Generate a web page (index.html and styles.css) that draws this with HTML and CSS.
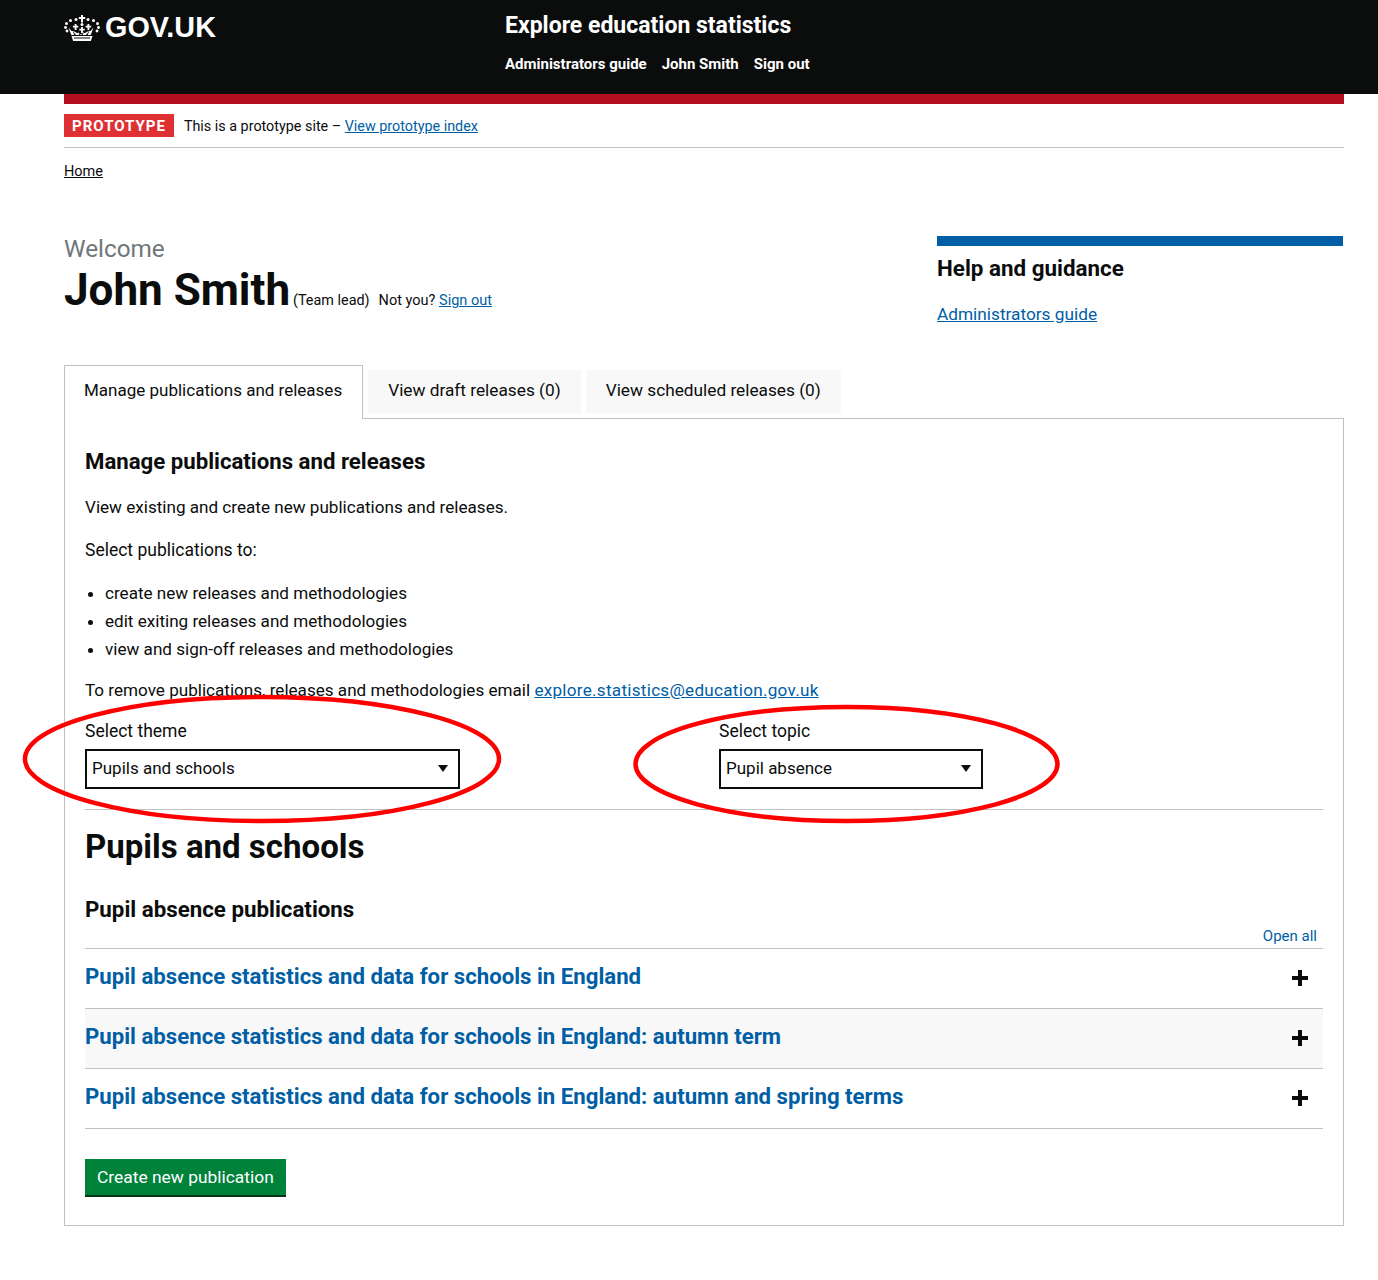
FILE: index.html
```html
<!DOCTYPE html>
<html lang="en">
<head>
<meta charset="utf-8">
<title>Explore education statistics</title>
<link rel="stylesheet" href="styles.css">
</head>
<body>
<header class="site-header">
  <div class="header-inner">
    <a class="logo" href="#">
      <svg class="crown" viewBox="0 0 36 26" width="36" height="26" aria-hidden="true">
        <g fill="#fff">
          <path d="M17 0h2v2h2.200v2H19v3.500h-2V4h-2.200V2H17z"/>
          <circle cx="18" cy="9.500" r="1.500"/>
          <circle cx="12" cy="4.500" r="1.500"/><circle cx="24" cy="4.500" r="1.500"/>
          <circle cx="6.500" cy="5.500" r="1.500"/><circle cx="29.500" cy="5.500" r="1.500"/>
          <circle cx="2.500" cy="8.500" r="1.500"/><circle cx="33.500" cy="8.500" r="1.500"/>
          <circle cx="1.500" cy="12.500" r="1.400"/><circle cx="34.500" cy="12.500" r="1.400"/>
          <circle cx="3" cy="16" r="1.400"/><circle cx="33" cy="16" r="1.400"/>
          <path d="M10.700 9h1.800v1.800h1.800v1.700h-1.800v2.500h-1.800v-2.500H8.900v-1.700h1.800zM23.500 9h1.800v1.800h1.800v1.700h-1.800v2.500h-1.800v-2.500h-1.800v-1.700h1.800z"/>
          <path d="M17.100 12h1.800v1.800h1.800v1.700h-1.800v2.500h-1.800v-2.500h-1.800v-1.700h1.800z"/>
          <path d="M4.500 12.500l2.800 7.500h3l-1.800-4.500 3.500 4.500h3.300l-1.200-3.500 2.400 3.500h1l2.400-3.500-1.200 3.500h3.300l3.500-4.500-1.800 4.500h3l2.800-7.500-3 3.500-2.500.2-3 1.800-2.500.5-1.500 1-1.500-1-2.500-.5-3-1.800-2.500-.2z"/>
          <path d="M7.500 21h21l-1.600 5H9.100zM9.600 22.400l.5 1.200h15.800l.5-1.200z" fill-rule="evenodd"/>
        </g>
      </svg>
      <span class="logo-text">GOV.UK</span>
    </a>
    <div class="service">
      <a class="service-name" href="#">Explore education statistics</a>
      <nav class="service-nav">
        <a href="#">Administrators guide</a>
        <a href="#">John Smith</a>
        <a href="#">Sign out</a>
      </nav>
    </div>
  </div>
</header>

<div class="container">
  <div class="red-bar"></div>
  <div class="phase">
    <strong class="phase-tag">PROTOTYPE</strong>
    <span>This is a prototype site – <a class="link" href="#">View prototype index</a></span>
  </div>
  <div class="breadcrumb"><a href="#">Home</a></div>

  <div class="intro">
    <div class="welcome">
      <div class="caption">Welcome</div>
      <div class="name-row">
        <h1 class="name">John Smith</h1>
        <span class="role">(Team lead)</span>
        <span class="notyou">Not you? <a class="link" href="#">Sign out</a></span>
      </div>
    </div>
    <aside class="help">
      <h2>Help and guidance</h2>
      <a class="link" href="#">Administrators guide</a>
    </aside>
  </div>

  <ul class="tabs">
    <li class="tab selected">Manage publications and releases</li>
    <li class="tab">View draft releases (0)</li>
    <li class="tab">View scheduled releases (0)</li>
  </ul>

  <section class="panel">
    <h2 class="panel-title">Manage publications and releases</h2>
    <p class="p1">View existing and create new publications and releases.</p>
    <p class="p2">Select publications to:</p>
    <ul class="bullets">
      <li>create new releases and methodologies</li>
      <li>edit exiting releases and methodologies</li>
      <li>view and sign-off releases and methodologies</li>
    </ul>
    <p class="p3">To remove publications, releases and methodologies email <a class="link email" href="#">explore.statistics@education.gov.uk</a></p>

    <div class="selects">
      <div class="field field-theme">
        <label>Select theme</label>
        <div class="select select-theme">Pupils and schools<span class="arrow"></span></div>
      </div>
      <div class="field field-topic">
        <label>Select topic</label>
        <div class="select select-topic">Pupil absence<span class="arrow"></span></div>
      </div>
    </div>

    <h2 class="theme-title">Pupils and schools</h2>
    <h3 class="topic-title">Pupil absence publications</h3>
    <div class="open-all"><a href="#">Open all</a></div>
    <div class="accordion">
      <div class="acc-row"><a href="#">Pupil absence statistics and data for schools in England</a><span class="plus"></span></div>
      <div class="acc-row shaded"><a href="#">Pupil absence statistics and data for schools in England: autumn term</a><span class="plus"></span></div>
      <div class="acc-row"><a href="#">Pupil absence statistics and data for schools in England: autumn and spring terms</a><span class="plus"></span></div>
    </div>
    <a class="button" href="#">Create new publication</a>
  </section>
</div>

<svg class="annotations" width="1378" height="1280" viewBox="0 0 1378 1280" aria-hidden="true">
  <ellipse cx="262" cy="759" rx="237" ry="62" />
  <ellipse cx="846.500" cy="764" rx="211" ry="57" />
</svg>
</body>
</html>
```
FILE: styles.css
```css
* { box-sizing: border-box; }
html, body { margin: 0; padding: 0; }
body {
  position: relative;
  height: 1280px;
  background: #fff;
  color: #0b0c0c;
  font-family: Roboto, "Liberation Sans", sans-serif;
  font-size: 16px;
  overflow: hidden;
}
a { color: inherit; }
.link { color: #005ea5; }

.site-header { background: #0b0c0c; height: 94px; }
.header-inner { display: flex; width: 1280px; margin-left: 64px; }
.logo {
  display: flex; align-items: flex-start; width: 441px; padding-top: 15px;
  color: #fff; text-decoration: none;
}
.crown { margin-right: 5px; }
.logo-text {
  font: bold 28.800px/26px "Liberation Sans", Arial, sans-serif; margin-top: -1px;
}
.service { padding-top: 12px; color: #fff; }
.service-name {
  display: block; font-size: 23px; line-height: 28px; font-weight: 700;
  color: #fff; text-decoration: none;
}
.service-nav { display: flex; gap: 15px; margin-top: 14px; }
.service-nav a {
  color: #fff; text-decoration: none; font-size: 15px; line-height: 20px; font-weight: 700;
}

.container { width: 1280px; margin-left: 64px; }
.red-bar { height: 10px; background: #b10e1e; }
.phase {
  display: flex; align-items: flex-start; gap: 10px;
  margin-top: 10px; height: 34px;
  border-bottom: 1px solid #bfc1c3;
  font-size: 14.350px; line-height: 25px;
}
.phase-tag {
  background: #df3034; color: #fff; padding: 0 8px;
  font-size: 15px; letter-spacing: 1px; font-weight: 700; height: 23px; line-height: 24px;
}
.breadcrumb { margin-top: 14px; font-size: 14.500px; line-height: 20px; }

.intro { display: flex; justify-content: space-between; margin-top: 54px; height: 129px; }
.caption { color: #6f777b; font-size: 24.300px; line-height: 30px; margin: -2px 0 1px; }
.name-row { display: flex; align-items: baseline; }
.name { margin: 0; font-size: 44px; line-height: 50px; font-weight: 700; }
.role { font-size: 14.400px; margin-left: 3px; }
.notyou { font-size: 14.500px; margin-left: 9px; }
.help { width: 406px; margin-right: 1px; border-top: 10px solid #005ea5; }
.help h2 { margin: 9px 0 21px; font-size: 22.400px; line-height: 26px; font-weight: 700; }
.help .link { font-size: 17.250px; line-height: 24px; }

.tabs {
  display: flex; align-items: flex-end; gap: 5px;
  list-style: none; margin: 0; padding: 0;
  position: relative; z-index: 1;
}
.tab {
  background: #f8f8f8; height: 43px; margin-bottom: 5px; padding: 0 20px;
  font-size: 17.250px; line-height: 40px;
}
.tab.selected {
  background: #fff; height: 54px; border: 1px solid #bfc1c3; border-bottom: 0;
  padding: 0 20px 0 19px; margin: 0 0 -1px; line-height: 48px; font-size: 17px;
}

.panel {
  border: 1px solid #bfc1c3; height: 808px; padding: 0 20px;
  font-size: 17.100px; line-height: 24px;
}
.panel-title { margin: 28px 0 0; font-size: 22.200px; line-height: 28px; font-weight: 700; }
.p1 { margin: 20px 0 0; }
.p2 { margin: 19px 0 0; font-size: 17.500px; }
.bullets { margin: 17px 0 0; padding: 0 0 0 20px; }
.bullets li { line-height: 28px; }
.p3 { margin: 15px 0 0; }
.email { letter-spacing: 0.280px; }

.selects { display: flex; margin-top: 17px; }
.field { flex: none; width: 634px; }
.field label { display: block; line-height: 24px; font-size: 17.500px; }
.select {
  position: relative; margin-top: 6px; height: 40px; border: 2px solid #0b0c0c;
  padding-left: 5px; line-height: 34px; font-size: 17px;
}
.select-theme { width: 375px; }
.select-topic { width: 264px; }
.arrow {
  position: absolute; right: 10px; top: 14px;
  border-left: 5px solid transparent; border-right: 5px solid transparent;
  border-top: 7px solid #0b0c0c;
}

.theme-title {
  margin: 20px 0 0; padding-top: 19px; border-top: 1px solid #bfc1c3;
  font-size: 33px; line-height: 36px; font-weight: 700;
}
.topic-title { margin: 30px 0 0; font-size: 22.300px; line-height: 28px; font-weight: 700; }
.open-all { text-align: right; font-size: 15px; line-height: 18px; margin-top: 4px; padding-right: 6px; }
.open-all a { color: #005ea5; text-decoration: none; }
.accordion { margin-top: 3px; border-top: 1px solid #bfc1c3; }
.acc-row {
  display: flex; justify-content: space-between; height: 60px;
  border-bottom: 1px solid #bfc1c3;
  font-size: 22.200px; line-height: 55px; font-weight: 700;
}
.acc-row a { color: #005ea5; text-decoration: none; }
.acc-row.shaded { background: #f8f8f8; }
.plus { position: relative; width: 16px; height: 16px; margin: 21px 15px 0 0; }
.plus::before, .plus::after { content: ""; position: absolute; background: #0b0c0c; }
.plus::before { left: 0; right: 0; top: 6px; height: 4px; }
.plus::after { top: 0; bottom: 0; left: 6px; width: 4px; }

.button {
  display: inline-block; margin-top: 30px; height: 36px; padding: 0 12px;
  background: #00823b; color: #fff; text-decoration: none;
  box-shadow: 0 2px 0 #003618; line-height: 36px; font-size: 17.400px;
}

.annotations { position: absolute; left: 0; top: 0; pointer-events: none; }
.annotations ellipse { fill: none; stroke: #f00; stroke-width: 4.500; }
```
